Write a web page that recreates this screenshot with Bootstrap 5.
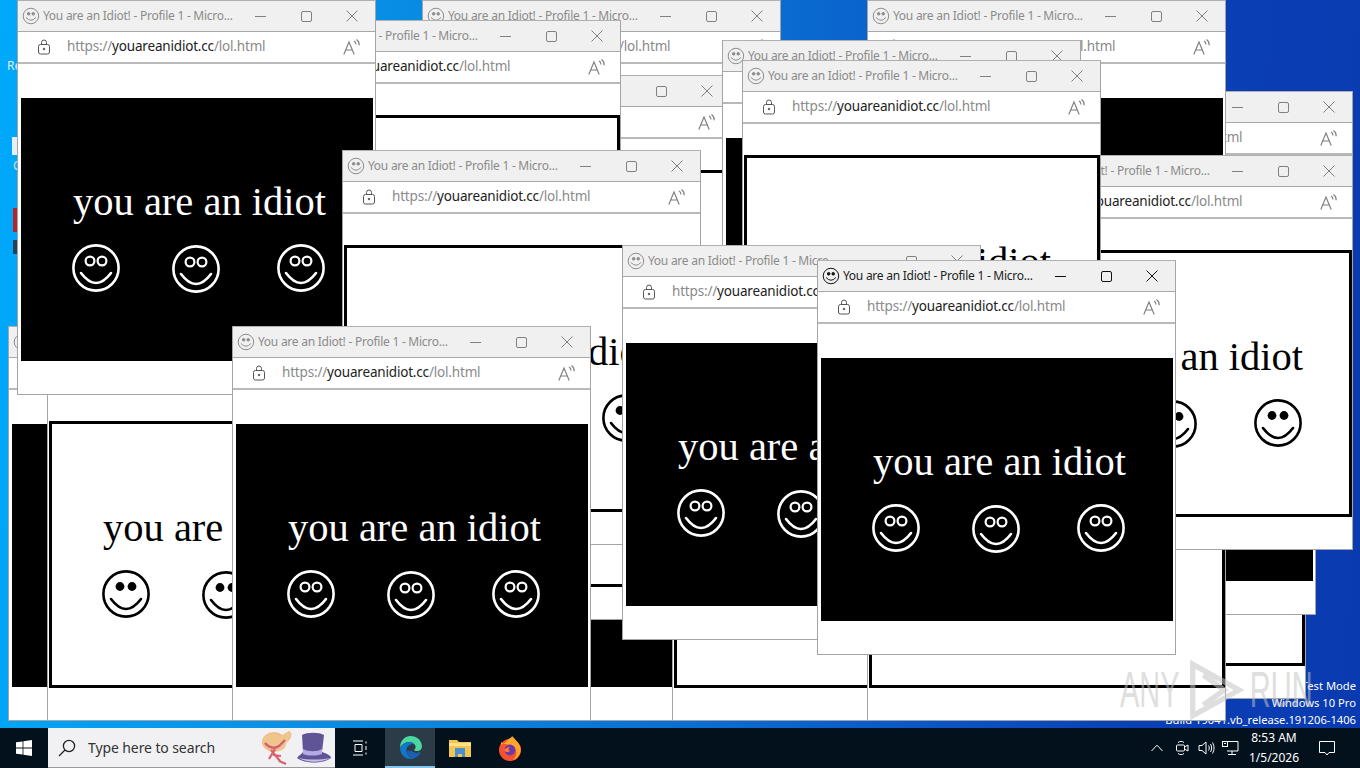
<!DOCTYPE html>
<html lang="en">
<head>
  <meta charset="UTF-8" />
  <title>You are an Idiot!</title>
  <link href="https://cdn.jsdelivr.net/npm/bootstrap@5.3.3/dist/css/bootstrap.min.css" rel="stylesheet" />
  <style>
    html, body {
      margin: 0;
      width: 1360px;
      height: 768px;
      overflow: hidden;
      font-family: "Noto Sans", "Open Sans", sans-serif;
    }

    .screen { width: 1360px; height: 768px; }

    .desk {
      height: 728px;
      background: linear-gradient(95deg, #00a9fa 0%, #0a86de 35%, #0a62cc 62%, #0a3fb6 85%, #0a3ab0 100%);
    }

    /* desktop leftovers */
    .desk-label { color: #dff3ff; font-size: 12px; left: 7px; top: 57px; }
    .desk-label-c { color: #bfeaff; font-size: 12px; left: 13px; top: 157px; }
    .desk-doc { left: 12px; top: 137px; width: 10px; height: 18px; background: #e8eef5; }
    .desk-red { left: 13px; top: 208px; width: 8px; height: 24px; background: #b3262e; }
    .desk-dark { left: 13px; top: 240px; width: 8px; height: 14px; background: #24405c; }

    .test-mode {
      right: 4px;
      bottom: 0;
      color: #fff;
      font-size: 11.2px;
      line-height: 17px;
      text-align: right;
    }

    /* browser popups */
    .popup {
      width: 359px;
      height: 395px;
      background: #fff;
      border: 1px solid #a4a4a4;
      border-top-color: #b0b0b0;
    }

    .popup-title {
      height: 31px;
      background: #f0f0f0;
      border-bottom: 1px solid #a8a8a8;
      color: #8b8b8b;
      font-size: 12px;
      padding-left: 4px;
    }

    .popup-title .title-text { width: 196px; margin-left: 3px; letter-spacing: -.25px; }
    .popup-title .ctl { width: 46px; height: 30px; }
    .popup-title .ctl svg { stroke: #808080; }
    .popup-top .popup-title { color: #222; }
    .popup-top .popup-title .ctl svg { stroke: #111; }

    .popup-addr {
      height: 32px;
      border-bottom: 2px solid #b9b9b9;
      font-size: 13.5px;
      padding: 0 0 1px 19px;
      color: #8a8a8a;
    }

    .popup-addr .url { width: 276px; margin-left: 16px; letter-spacing: -.18px; }
    .popup-addr .url b { font-weight: 400; color: #222; }

    .pane-black {
      margin: 34px 2px 0 3px;
      height: 263px;
      background: #000;
      color: #fff;
      padding-left: 52px;
    }

    .pane-white {
      margin: 31px 0 0 1px;
      width: 356px;
      height: 267px;
      background: #fff;
      color: #000;
      border: 3px solid #000;
      padding-left: 51px;
    }

    .idiot-line {
      font-family: "Liberation Serif", serif;
      font-size: 40.5px;
      line-height: 48px;
      padding-top: 80px;
      width: 253px;
      overflow: hidden;
      white-space: nowrap;
    }

    .smile-row { margin-top: 18px; margin-left: -1px; }
    .smile-row svg { display: block; flex: none; }
    .smile-row .smile-mid { margin: 1px 57px 0 52px; }

    /* taskbar */
    .taskbar { height: 40px; background: #03111d; }
    .start-btn { width: 48px; height: 40px; }
    .search-box {
      width: 287px;
      height: 40px;
      background: #f1f1f4;
      border-bottom: 1px solid #999;
      color: #333;
      font-size: 14px;
      padding-left: 10px;
    }
    .search-box .search-text { margin-left: 12px; width: 173px; letter-spacing: -.1px; }
    .task-btn { width: 50px; height: 40px; }
    .task-active { background: #2b3b47; border-bottom: 2px solid #83c6ee; }
    .tray { color: #fff; font-size: 12px; margin-right: 11px; }
    .tray-clock { width: 62px; line-height: 20px; text-align: center; }
    .tray-item { width: 24.5px; }
    .tray-note { width: 44px; }

    /* watermark */
    .any-run {
      left: 1120px;
      top: 660px;
      color: rgba(195, 195, 195, .55);
      font-family: "Liberation Sans", sans-serif;
      font-size: 50px;
      line-height: 56px;
      transform: scaleX(.58);
      transform-origin: left center;
      pointer-events: none;
    }
  </style>
</head>
<body>
  <svg width="0" height="0" class="position-absolute">
    <defs>
      <symbol id="smile-hollow" viewBox="0 0 48 48">
        <circle cx="24" cy="24" r="22.6" fill="none" stroke="#fff" stroke-width="2.6" />
        <circle cx="18" cy="17" r="4.4" fill="none" stroke="#fff" stroke-width="2.2" />
        <circle cx="30" cy="17" r="4.4" fill="none" stroke="#fff" stroke-width="2.2" />
        <path d="M9 29Q24 49 39 29" fill="none" stroke="#fff" stroke-width="2.6" stroke-linecap="round" />
      </symbol>
      <symbol id="smile-solid" viewBox="0 0 48 48">
        <circle cx="24" cy="24" r="22.6" fill="none" stroke="#000" stroke-width="2.6" />
        <circle cx="18" cy="16.5" r="4.4" fill="#000" />
        <circle cx="30" cy="16.5" r="4.4" fill="#000" />
        <path d="M9 29Q24 49 39 29" fill="none" stroke="#000" stroke-width="2.6" stroke-linecap="round" />
      </symbol>
    </defs>
  </svg>

  <div class="screen d-flex flex-column">
    <div class="desk position-relative overflow-hidden" id="desk">
      <div class="desk-label position-absolute">Recycle Bin</div>
      <div class="desk-doc position-absolute"></div>
      <div class="desk-label-c position-absolute">Chrome</div>
      <div class="desk-red position-absolute"></div>
      <div class="desk-dark position-absolute"></div>
      <div class="test-mode position-absolute">
        Test Mode<br />Windows 10 Pro<br />Build 19041.vb_release.191206-1406
      </div>
    </div>

    <div class="taskbar d-flex align-items-center">
      <div class="start-btn d-flex align-items-center justify-content-center">
        <svg width="16" height="16" viewBox="0 0 16 16" fill="#fff"><path d="M0 2.3 6.6 1.4V7.6H0ZM7.4 1.3 16 0V7.6H7.4ZM0 8.4H6.6V14.6L0 13.7ZM7.4 8.4H16V16L7.4 14.7Z" /></svg>
      </div>
      <div class="search-box d-flex align-items-center">
        <svg width="18" height="18" viewBox="0 0 18 18" fill="none" stroke="#222" stroke-width="1.3"><circle cx="11" cy="7" r="5.6" /><path d="M7 11 1 17" /></svg>
        <span class="search-text text-nowrap">Type here to search</span>
        <svg width="72" height="40" viewBox="0 0 72 40">
          <ellipse cx="13" cy="14" rx="12" ry="10" fill="#ecc08a" />
          <path d="M2 13C4 6 14 5 19 8L28 3C33 5 30 12 25 15C25 22 19 24 13 22L8 20C3 19 1 17 2 13Z" fill="#eec58d" />
          <path d="M4 15C8 20 14 21 18 18L24 12" fill="none" stroke="#d95f6e" stroke-width="2.4" />
          <path d="M10 22 19 33M14 21 8 31M18 33 25 36M12 27 20 28" stroke="#d95f6e" stroke-width="2.2" fill="none" />
          <path d="M41 7C46 4 58 4 63 7L61 24C67 26 70 28 70 30C62 36 44 36 36 30C38 27 41 26 42 24Z" fill="#5f5596" />
          <path d="M42 21C48 24 56 24 61 21L61 26C55 28 47 28 42 26Z" fill="#b5a9e6" />
          <path d="M38 30C46 35 60 35 69 30C60 32 46 32 38 30Z" fill="#c9c0f0" />
        </svg>
      </div>
      <div class="task-btn d-flex align-items-center justify-content-center">
        <svg width="16" height="16" viewBox="0 0 16 16" fill="none" stroke="#fff" stroke-width="1"><path d="M1 1H11M1 15H11M3 4.5H10V11.5H3ZM14 1.5V3.5M14 6V10M14 12.5V14.5" /></svg>
      </div>
      <div class="task-btn task-active d-flex align-items-center justify-content-center">
        <svg width="25" height="25" viewBox="0 0 24 24">
          <path d="M2 12C2 5 7 1 12 1C18 1 23 5 23 11C23 15 19 16 16 15C14 14 19 13 16 9C13 5 5 6 2 12Z" fill="#4cd6a0" />
          <path d="M2 12C5 6 13 5 16 9C13 8 8 10 8 15C8 19 12 23 16 22C12 24 2 23 2 12Z" fill="#0f78c8" />
          <path d="M8 15C8 19 12 23 16 22C19 21 21 19 22 16C19 18 15 17 13 15Z" fill="#1b5fb0" />
        </svg>
      </div>
      <div class="task-btn d-flex align-items-center justify-content-center">
        <svg width="22" height="20" viewBox="0 0 22 20">
          <path d="M0 2H8L10 4H22V19H0Z" fill="#f3c54f" />
          <path d="M0 5H22V8H0Z" fill="#ffe08a" />
          <path d="M6 10H16V19H13V16H9V19H6Z" fill="#4a90d0" />
        </svg>
      </div>
      <div class="task-btn d-flex align-items-center justify-content-center">
        <svg width="24" height="25" viewBox="0 0 24 25">
          <circle cx="12" cy="14" r="11" fill="#f7512f" />
          <path d="M3 6C3 12 6 6 8 6C9 3 14 2 14 0C17 3 20 6 22 10C24 16 21 22 15 24C20 19 19 13 15 10C11 8 6 9 3 6Z" fill="#ffa62b" />
          <circle cx="12" cy="14" r="5.4" fill="#6a3ba8" />
          <path d="M6 14C8 12 10 11 12 11C10 13 10 14 12 15C10 17 7 16 6 14Z" fill="#ff7a3c" />
        </svg>
      </div>

      <div class="tray ms-auto d-flex align-items-center">
        <div class="tray-item d-flex justify-content-center">
          <svg width="12" height="8" viewBox="0 0 12 8" fill="none" stroke="#fff" stroke-width="1"><path d="M.5 7 6 1.2 11.500 7" /></svg>
        </div>
        <div class="tray-item d-flex justify-content-center">
          <svg width="16" height="16" viewBox="0 0 16 16" fill="none" stroke="#fff" stroke-width="1"><path d="M4 2.500C6 1 8 1 10 2.500M4 13.500C6 15 8 15 10 13.500" /><rect x="2.500" y="5" width="8" height="6" rx="1" /><path d="M10.500 7 14 5V11L10.500 9" /></svg>
        </div>
        <div class="tray-item d-flex justify-content-center">
          <svg width="17" height="14" viewBox="0 0 17 14" fill="none" stroke="#fff" stroke-width="1"><path d="M1 4.500H4L8 1V13L4 9.500H1ZM10.500 4.500C11.500 6 11.500 8 10.500 9.500M12.500 3C14 5.500 14 8.500 12.500 11M14.500 1.500C16.500 5 16.500 9 14.500 12.500" /></svg>
        </div>
        <div class="tray-item d-flex justify-content-center">
          <svg width="17" height="16" viewBox="0 0 17 16" fill="none" stroke="#fff" stroke-width="1"><path d="M4.500 1.500H16V11H5M10 11V14.500M6 14.500H14" /><rect x=".5" y="1.500" width="5" height="5" /><path d="M2 3.500H4" /></svg>
        </div>
        <div class="tray-clock">8:53 AM<br />1/5/2026</div>
        <div class="d-flex justify-content-center tray-note">
          <svg width="16" height="15" viewBox="0 0 16 15" fill="none" stroke="#fff" stroke-width="1"><path d="M.5.5H15.500V11.500H10L8 14 6 11.500H.5Z" /></svg>
        </div>
      </div>
    </div>
  </div>

  <script>
    const popups = [
      { x: 947, y: 304, pane: "white" },
      { x: 957, y: 220, pane: "black" },
      { x: 370, y: 240, pane: "white" },
      { x: 330, y: 326, pane: "black" },
      { x: 672, y: 326, pane: "white" },
      { x: 867, y: 326, pane: "white" },
      { x: 8, y: 326, pane: "black" },
      { x: 47, y: 326, pane: "white" },
      { x: 422, y: 0, pane: "white" },
      { x: 994, y: 91, pane: "white" },
      { x: 867, y: 0, pane: "black" },
      { x: 994, y: 155, pane: "white" },
      { x: 372, y: 75, pane: "white" },
      { x: 262, y: 20, pane: "white" },
      { x: 722, y: 40, pane: "black" },
      { x: 742, y: 60, pane: "white" },
      { x: 300, y: 225, pane: "white" },
      { x: 17, y: 0, pane: "black" },
      { x: 342, y: 150, pane: "white" },
      { x: 622, y: 245, pane: "black" },
      { x: 232, y: 326, pane: "black" },
      { x: 817, y: 260, pane: "black", top: true }
    ];

    function titleIcon(color) {
      return `<svg width="18" height="18" viewBox="0 0 18 18" fill="none" stroke="${color}" stroke-width="1">
        <circle cx="9" cy="9" r="7.8" /><circle cx="6.700" cy="6.800" r="1.300" fill="${color}" /><circle cx="11.300" cy="6.800" r="1.300" fill="${color}" />
        <path d="M4 10.500Q9 16 14 10.500" /></svg>`;
    }

    function popupHtml(p) {
      const smile = p.pane === "black" ? "#smile-hollow" : "#smile-solid";
      const use = `<use href="${smile}" />`;
      return `
        <div class="popup-title d-flex align-items-center">
          ${titleIcon(p.top ? "#111" : "#8c8c8c")}
          <span class="title-text text-nowrap overflow-hidden">You are an Idiot! - Profile 1 - Micro...</span>
          <span class="ms-auto ctl d-flex align-items-center justify-content-center">
            <svg width="11" height="11" viewBox="0 0 11 11" fill="none"><path d="M0 5.500H11" /></svg></span>
          <span class="ctl d-flex align-items-center justify-content-center">
            <svg width="11" height="11" viewBox="0 0 11 11" fill="none"><rect x=".5" y=".5" width="10" height="10" rx="1.500" /></svg></span>
          <span class="ctl d-flex align-items-center justify-content-center">
            <svg width="12" height="12" viewBox="0 0 12 12" fill="none"><path d="M.5.5 11.500 11.500M11.500.5 .5 11.500" /></svg></span>
        </div>
        <div class="popup-addr d-flex align-items-center">
          <svg width="14" height="16" viewBox="0 0 14 16" fill="none" stroke="#555"><rect x="1.500" y="5.500" width="11" height="9.500" rx="2" /><path d="M4.500 5.500V3.500A2.500 2.500 0 0 1 9.500 3.500V5.500" /><circle cx="7" cy="10" r=".8" fill="#555" /></svg>
          <span class="url text-nowrap">https://<b>youareanidiot.cc</b>/lol.html</span>
          <svg width="18" height="16" viewBox="0 0 18 16" fill="none" stroke="#7c7c7c" stroke-width="1.100"><path d="M.8 15.500 6 3 11.200 15.500M2.600 11H9.400M11 2C12.500 2.800 13 4.200 13 5.500M13.500 .5C15.500 1.800 16.300 4 16.200 6.300" /></svg>
        </div>
        <div class="pane-${p.pane}">
          <div class="idiot-line">you are an idiot</div>
          <div class="smile-row d-flex">
            <svg width="48" height="48">${use}</svg>
            <svg class="smile-mid" width="48" height="48">${use}</svg>
            <svg width="48" height="48">${use}</svg>
          </div>
        </div>`;
    }

    const desk = document.getElementById("desk");
    popups.forEach(p => {
      const win = document.createElement("div");
      win.className = "popup position-absolute overflow-hidden" + (p.top ? " popup-top" : "");
      win.style.left = p.x + "px";
      win.style.top = p.y + "px";
      win.innerHTML = popupHtml(p);
      desk.appendChild(win);
    });

    // ANY.RUN stamp over everything
    const stamp = document.createElement("div");
    stamp.className = "any-run position-absolute d-flex align-items-center";
    stamp.innerHTML = `<span>ANY</span>
      <svg class="mx-2" width="105" height="60" viewBox="0 0 58 56" preserveAspectRatio="none" fill="none" stroke="rgba(195,195,195,.55)" stroke-width="5">
        <path d="M8 4V52L52 28ZM18 14 38 28 18 42" /></svg>
      <span>RUN</span>`;
    desk.appendChild(stamp);
  </script>
</body>
</html>
